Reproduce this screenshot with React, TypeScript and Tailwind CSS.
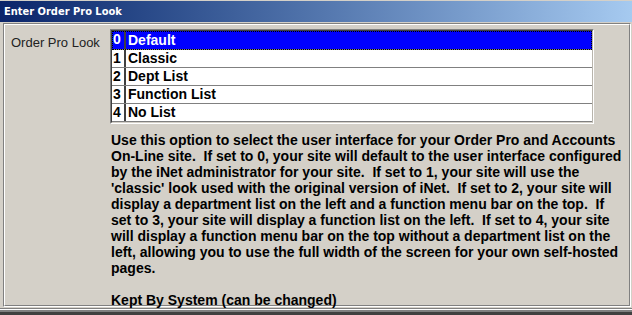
import React from "react";

const items = ["Default", "Classic", "Dept List", "Function List", "No List"];

const lines = [
  "Use this option to select the user interface for your Order Pro and Accounts",
  "On-Line site.  If set to 0, your site will default to the user interface configured",
  "by the iNet administrator for your site.  If set to 1, your site will use the",
  "'classic' look used with the original version of iNet.  If set to 2, your site will",
  "display a department list on the left and a function menu bar on the top.  If",
  "set to 3, your site will display a function list on the left.  If set to 4, your site",
  "will display a function menu bar on the top without a department list on the",
  "left, allowing you to use the full width of the screen for your own self-hosted",
  "pages.",
  " ",
  "Kept By System (can be changed)",
];

export default function App() {
  return (
    <div className="w-[632px] h-[315px] overflow-hidden bg-[#d4d0c8] flex flex-col font-['Liberation_Sans',Arial,sans-serif]">
      {/* Title bar */}
      <div className="mt-[1px] h-[21px] shrink-0 flex items-center pl-[4px] bg-gradient-to-r from-[#0a246a] to-[#a6caf0]">
        <span className="text-white font-bold text-[11px] leading-[13px] font-['DejaVu_Sans_Condensed','DejaVu_Sans',sans-serif] [font-stretch:condensed]">
          Enter Order Pro Look
        </span>
      </div>
      {/* Panel */}
      <div className="mt-[1px] ml-[3px] w-[628px] h-[284px] shrink-0 border-t border-l border-t-[#808080] border-l-[#808080] border-r border-b border-r-white border-b-white">
        <div className="h-full border-t border-l border-t-white border-l-white border-r border-b border-r-[#808080] border-b-[#808080] flex flex-col">
          <div className="flex pt-[4px]">
            <div className="w-[105px] shrink-0 pl-[6px] mt-[6px] text-[13px] leading-[15px] text-[#222]">
              Order Pro Look
            </div>
            <div className="w-[484px] shrink-0 border-t border-l border-t-[#808080] border-l-[#808080] border-r border-b border-r-white border-b-white">
              <div className="border-t border-l border-t-[#404040] border-l-[#404040] border-r border-b border-r-[#b8b4ac] border-b-[#d4d0c8] bg-white">
                {items.map((it, i) => {
                  const sel = i === 0;
                  return (
                    <div
                      key={it}
                      className={
                        "flex border-b border-b-[#808080] text-[14px] font-bold leading-[17px] " +
                        (sel
                          ? "h-[19px] bg-[#0000ff] text-white outline-1 outline-dotted outline-black -outline-offset-1"
                          : "h-[18px] text-black")
                      }
                    >
                      <div className="w-[14px] shrink-0 pl-[1px] border-r-2 border-r-[#404040]">
                        {i}
                      </div>
                      <div className={"pl-[2px] " + (sel ? "pt-[1px]" : "")}>{it}</div>
                    </div>
                  );
                })}
              </div>
            </div>
          </div>
          <div className="mt-[8px] pl-[106px] text-[14px] font-bold leading-[16px] text-black whitespace-pre">
            {lines.map((l, i) => (
              <div key={i}>{l}</div>
            ))}
          </div>
        </div>
      </div>
      {/* bottom edge */}
      <div className="mt-[1px] h-[1px] bg-[#808080] shrink-0" />
      <div className="h-[1px] bg-white shrink-0" />
      <div className="h-[2px] bg-[#808080] shrink-0" />
      <div className="flex-1 bg-[#404040]" />
    </div>
  );
}
